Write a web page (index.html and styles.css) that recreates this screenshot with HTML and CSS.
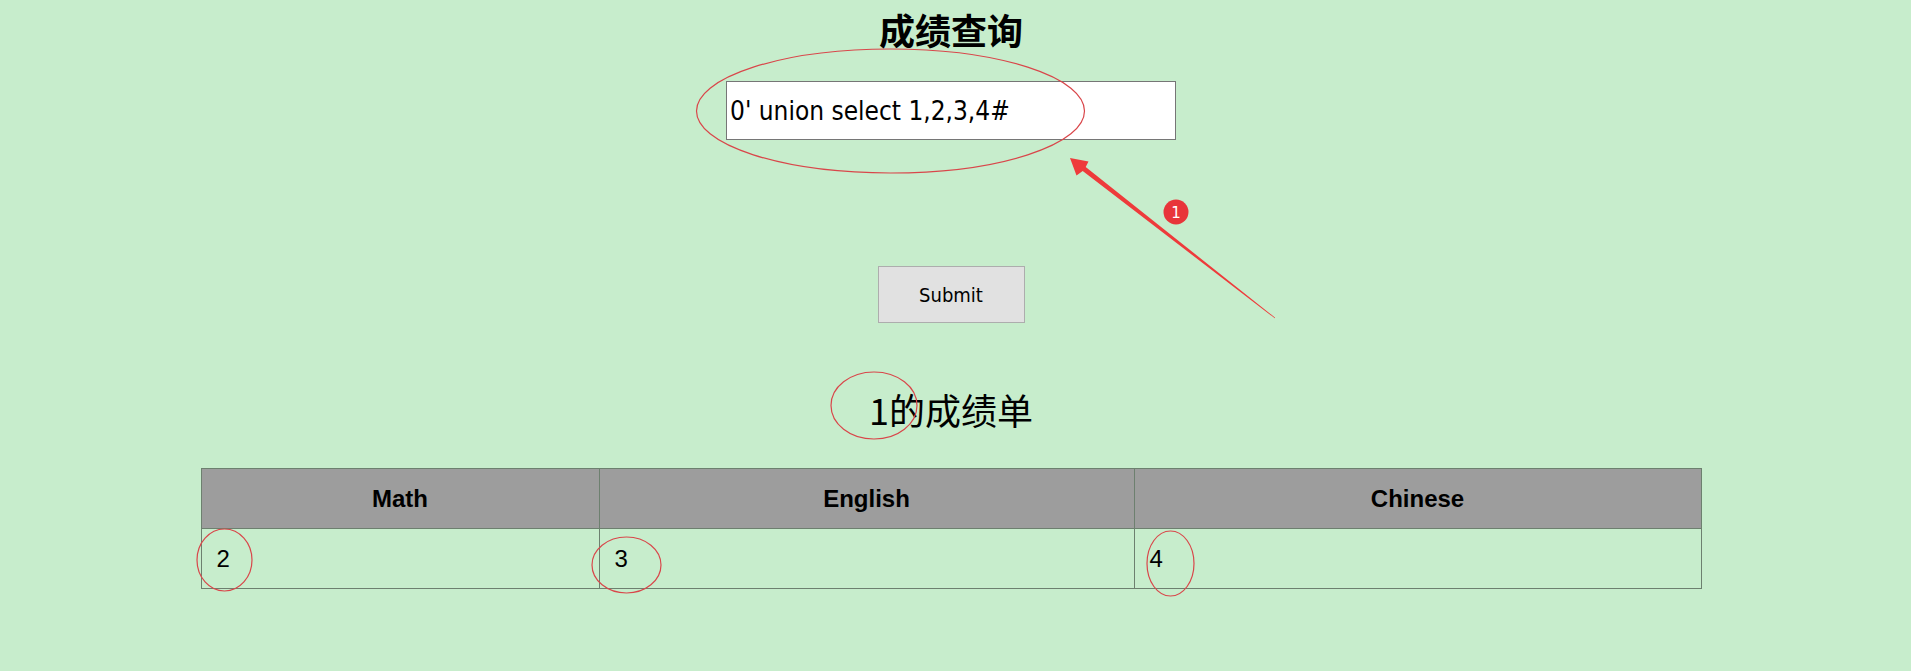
FILE: index.html
```html
<!DOCTYPE html>
<html lang="zh-CN">
<head>
<meta charset="utf-8">
<title>成绩查询</title>
<link rel="stylesheet" href="styles.css">
</head>
<body>
<div class="page">
  <h1 class="title">成绩查询</h1>
  <form class="query-form">
    <input class="query-input" type="text" value="0' union select 1,2,3,4#">
    <button class="submit-btn" type="button">Submit</button>
  </form>
  <h2 class="result-title">1的成绩单</h2>
  <table class="score-table">
    <colgroup>
      <col class="col-math">
      <col class="col-english">
      <col class="col-chinese">
    </colgroup>
    <thead>
      <tr><th>Math</th><th>English</th><th>Chinese</th></tr>
    </thead>
    <tbody>
      <tr><td>2</td><td>3</td><td>4</td></tr>
    </tbody>
  </table>
</div>
<svg class="annotations" width="1911" height="671" viewBox="0 0 1911 671" xmlns="http://www.w3.org/2000/svg">
  <g fill="none" stroke="#d9464a" stroke-width="1.2">
    <ellipse cx="890.5" cy="111" rx="194" ry="62"/>
    <ellipse cx="874" cy="405.5" rx="43" ry="33.5"/>
    <ellipse cx="224.5" cy="560" rx="27.5" ry="31"/>
    <ellipse cx="626.5" cy="565" rx="34.5" ry="28"/>
    <ellipse cx="1170.5" cy="563.5" rx="23.5" ry="32.5"/>
  </g>
  <polygon fill="#ee3b3b" points="1070,158 1088.5,161.5 1085.7,167.1 1275.2,317.7 1274.8,318.3 1082.7,171.1 1076.5,175.5"/>
  <circle cx="1176" cy="212" r="12.5" fill="#e8353a"/>
  <text x="1176" y="217.5" text-anchor="middle" class="badge-text">1</text>
</svg>
</body>
</html>
```

FILE: styles.css
```css
html, body {
  margin: 0;
  padding: 0;
}

body {
  background: #c7edcc;
  color: #000;
  width: 1911px;
  height: 671px;
  overflow: hidden;
  position: relative;
}

.page {
  width: 1902px;
  display: flex;
  flex-direction: column;
  align-items: center;
}

.title {
  margin: 3px 0 0;
  font: bold 36px/52px "Noto Sans CJK SC", sans-serif;
}

.query-form {
  display: flex;
  flex-direction: column;
  align-items: center;
  margin: 0;
}

.query-input {
  margin-top: 26px;
  width: 450px;
  height: 59px;
  box-sizing: border-box;
  border: 1px solid #767676;
  background: #fff;
  padding: 0 3px;
  font-family: "DejaVu Sans Condensed", "DejaVu Sans", sans-serif;
  font-stretch: condensed;
  font-size: 26px;
  color: #000;
  outline: none;
}

.submit-btn {
  margin-top: 126px;
  width: 147px;
  height: 57px;
  box-sizing: border-box;
  background: #e1e1e1;
  border: 1px solid #adadad;
  border-radius: 0;
  font-family: "DejaVu Sans Condensed", "DejaVu Sans", sans-serif;
  font-stretch: condensed;
  font-size: 20px;
  color: #000;
  padding: 0;
}

.result-title {
  margin: 60px 0 0;
  font: normal 36px/52px "Noto Sans CJK SC", sans-serif;
}

.score-table {
  margin-top: 33px;
  width: 1500px;
  border-collapse: collapse;
  table-layout: fixed;
  font-family: "Liberation Sans", Arial, sans-serif;
  font-size: 24px;
}

.col-math { width: 398px; }
.col-english { width: 535px; }
.col-chinese { width: 567px; }

.score-table th,
.score-table td {
  border: 1px solid #6d806f;
  height: 60px;
  padding: 0 15px;
  box-sizing: border-box;
}

.score-table th {
  background: #9d9d9d;
  font-weight: bold;
  text-align: center;
}

.score-table td {
  text-align: left;
}

.annotations {
  position: absolute;
  left: 0;
  top: 0;
  pointer-events: none;
}

.badge-text {
  fill: #fff;
  font-family: "DejaVu Sans", sans-serif;
  font-size: 15px;
}
```
